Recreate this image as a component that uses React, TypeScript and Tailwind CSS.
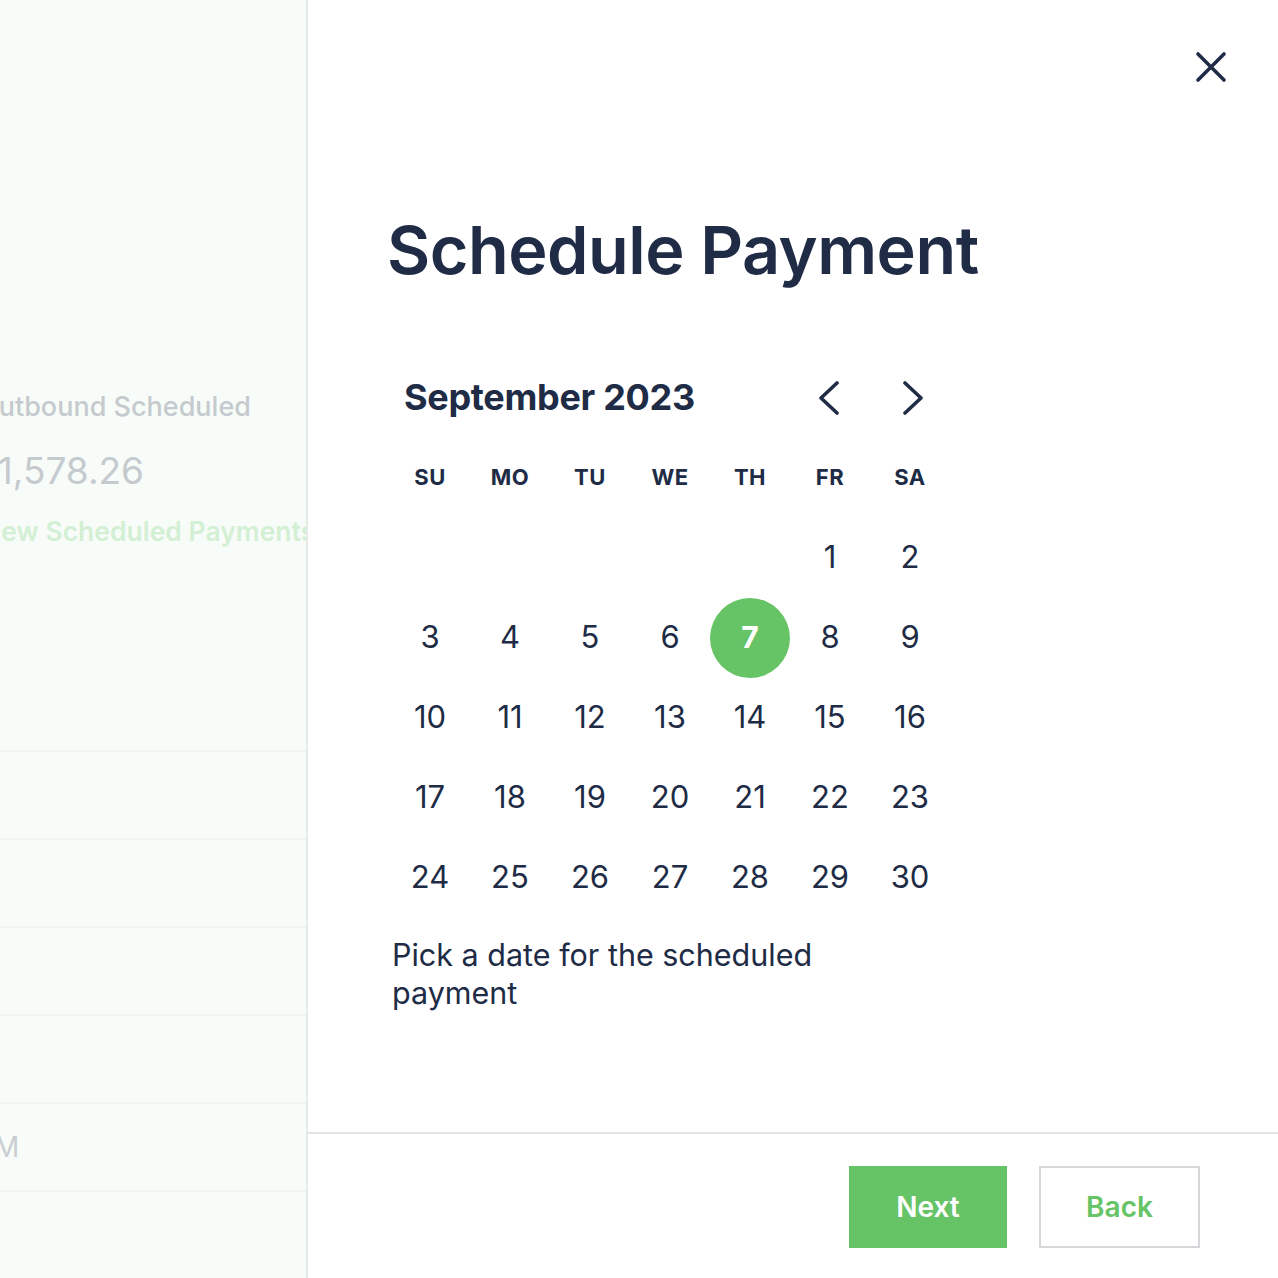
const weekdays = ['SU', 'MO', 'TU', 'WE', 'TH', 'FR', 'SA'];
const days: (number | null)[] = [
  null, null, null, null, null, 1, 2,
  ...Array.from({ length: 28 }, (_, i) => i + 3),
];

function Chevron({ dir }: { dir: 'left' | 'right' }) {
  return (
    <svg width="22" height="34" viewBox="0 0 22 34" fill="none" stroke="currentColor" strokeWidth="3.6" strokeLinecap="round" strokeLinejoin="round">
      {dir === 'left' ? <path d="M19 2 L3 17 L19 32" /> : <path d="M3 2 L19 17 L3 32" />}
    </svg>
  );
}

function CloseIcon() {
  return (
    <svg width="32" height="32" viewBox="0 0 32 32" fill="none" stroke="currentColor" strokeWidth="3.6" strokeLinecap="round">
      <path d="M3 3 L29 29 M29 3 L3 29" />
    </svg>
  );
}

function BackgroundPage() {
  return (
    <div className="w-[308px] shrink-0 overflow-hidden border-r-2 border-[#e6ebe7] bg-[#f8fcf9]">
      <div className="pt-[387px]">
        <p className="ml-[-22px] text-[27px] font-medium text-[#c5cace] whitespace-nowrap">Outbound Scheduled</p>
        <p className="ml-[-26px] mt-[19px] text-[37px] text-[#c5cace] whitespace-nowrap leading-[48px]">$1,578.26</p>
        <p className="ml-[-25px] mt-[17px] text-[26.5px] font-semibold text-[#d3efd4] whitespace-nowrap">View Scheduled Payments</p>
      </div>
      <div className="mt-[199px]">
        {[0, 1, 2, 3, 4, 5].map((i) => (
          <div key={i} className="h-[88px] border-t-2 border-[#eff4f0] flex items-center">
            {i === 4 && <span className="ml-[-24px] text-[28px] text-[#c9ced2]">PM</span>}
          </div>
        ))}
      </div>
    </div>
  );
}

export default function App() {
  return (
    <div
      className="flex h-[1278px] w-[1278px] overflow-hidden bg-white text-[#202b45]"
      style={{ fontFamily: 'Inter, "Noto Sans", sans-serif' }}
    >
      <BackgroundPage />
      <div className="flex flex-1 flex-col">
        <div className="flex justify-end pr-[51px] pt-[51px]">
          <button className="text-[#202b45]">
            <CloseIcon />
          </button>
        </div>
        <div className="flex-1 pl-[81px]">
          <h1 className="ml-[-2px] mt-[134px] text-[66.5px] font-semibold leading-none tracking-[-0.5px]">Schedule Payment</h1>
          <div className="ml-[1px] mt-[86px] w-[560px]">
            <div className="flex items-center justify-between pl-[14px] pr-[26px]">
              <span className="text-[36px] font-bold tracking-[-0.3px]">September 2023</span>
              <div className="flex items-center gap-[62px] pt-[2px]">
                <Chevron dir="left" />
                <Chevron dir="right" />
              </div>
            </div>
            <div className="mt-[36px] grid grid-cols-7">
              {weekdays.map((d) => (
                <div key={d} className="flex h-[59px] items-start justify-center pt-[1px] text-[22px] font-bold tracking-[0.5px]">
                  {d}
                </div>
              ))}
            </div>
            <div className="mt-[-1px] grid grid-cols-7">
              {days.map((d, i) => (
                <div key={i} className="flex h-[80px] items-center justify-center">
                  {d === 7 ? (
                    <div className="flex h-[80px] w-[80px] items-center justify-center rounded-full bg-[#66c466] text-[30px] font-bold text-white">
                      7
                    </div>
                  ) : (
                    <span className="text-[31px]">{d ?? ''}</span>
                  )}
                </div>
              ))}
            </div>
          </div>
          <p className="mt-[18px] w-[440px] pl-[3px] text-[30.5px] leading-[38px]">
            Pick a date for the scheduled payment
          </p>
        </div>
        <div className="flex h-[146px] justify-end gap-[32px] border-t-2 border-[#e4e4e7] pr-[78px] pt-[32px]">
          <button className="h-[82px] w-[158px] bg-[#66c466] text-[28px] font-semibold text-white">Next</button>
          <button className="h-[82px] w-[161px] border-2 border-[#d6d6db] bg-white text-[28px] font-semibold text-[#66c466]">
            Back
          </button>
        </div>
      </div>
    </div>
  );
}
